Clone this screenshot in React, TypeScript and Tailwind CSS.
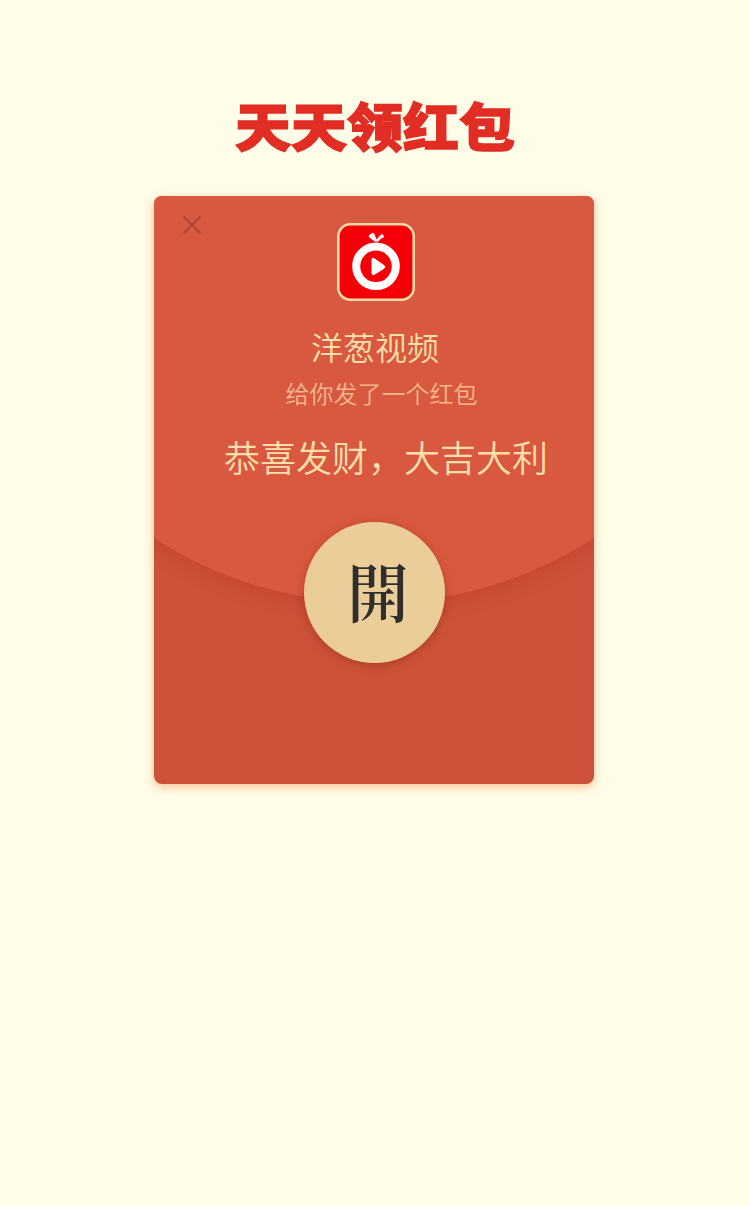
function CloseIcon() {
  return (
    <svg viewBox="0 0 20 20" className="h-5 w-5" fill="none" stroke="#a84536" strokeWidth="2.2">
      <path d="M1.5 1.5 18.5 18.5M18.5 1.5 1.5 18.5" />
    </svg>
  );
}

function OnionLogo() {
  return (
    <svg viewBox="0 0 78 78" className="ml-0.5 h-[78px] w-[78px]">
      <rect x="1.3" y="1.3" width="75.4" height="75.4" rx="12" fill="#f50008" stroke="#fddca4" strokeWidth="2.6" />
      <circle cx="39" cy="43.3" r="19.8" fill="none" stroke="#fff" strokeWidth="8" />
      <path
        d="M35 36.4v13.8q0 2.4 2.2 1.3l9.8-6.2q2-1.4 0-2.8l-9.8-6.8q-2.2-1.2-2.2.7Z"
        fill="#fff"
        stroke="#fff"
        strokeWidth="1"
        strokeLinejoin="round"
      />
      <path
        d="M37.6 18.6C36.1 16.2 33.3 15.9 31.6 13.4C32 11.9 35.4 9.3 36.9 10.2C38.4 12.3 38.6 14.8 39.6 16.4C40.8 14.7 42.4 13 44.6 11.2C46.6 11.4 47.2 12.8 46.4 14.8C43.9 15.4 42.6 16.8 41.4 18.6Z"
        fill="#fff"
      />
    </svg>
  );
}

export default function App() {
  return (
    <main className="flex h-[1206px] w-[750px] flex-col items-center overflow-hidden bg-[#fffce8] font-['Noto_Sans_CJK_SC',sans-serif]">
      <h1 className="mt-[97px] h-14 scale-y-[0.93] whitespace-nowrap text-[56px] leading-[56px] font-black text-[#e12d24] [-webkit-text-stroke:1.5px_#e12d24]">
        天天领红包
      </h1>
      <section className="relative isolate mt-[43px] mr-0.5 h-[588px] w-[440px] overflow-hidden rounded-lg bg-[#cc5239] shadow-[0_3px_8px_rgba(250,140,60,0.5)]">
        <div className="absolute -top-[403px] -left-[185px] -z-10 h-[810px] w-[810px] rounded-full bg-[#d95940] shadow-[0_3px_18px_rgba(190,50,30,0.45)]" />
        <button aria-label="关闭" className="absolute top-[19px] left-7">
          <CloseIcon />
        </button>
        <div className="flex flex-col items-center pt-[27px] pl-0.5">
          <OnionLogo />
          <h2 className="mt-[29px] h-8 whitespace-nowrap text-[32px] leading-8 font-[350] text-[#fddfaa]">洋葱视频</h2>
          <p className="mt-[19px] ml-[13px] h-6 whitespace-nowrap text-2xl leading-6 font-[350] text-[#f3b88c]">
            给你发了一个红包
          </p>
          <p className="mt-[33px] ml-[22px] h-9 whitespace-nowrap text-4xl leading-9 font-[350] text-[#fddfaa]">
            恭喜发财，大吉大利
          </p>
          <button className="mt-12 -ml-0.5 flex h-[141px] w-[141px] items-center justify-center rounded-full bg-[#eacd99] pb-[7px] pl-2 font-['Noto_Serif_CJK_TC','Noto_Serif_CJK_SC','Noto_Sans_CJK_TC',serif] text-[64px] leading-none font-semibold text-[#2f2f2f] shadow-[0_2px_9px_rgba(145,40,20,0.5)]">
            <span className="scale-x-[0.96]">開</span>
          </button>
        </div>
      </section>
    </main>
  );
}
